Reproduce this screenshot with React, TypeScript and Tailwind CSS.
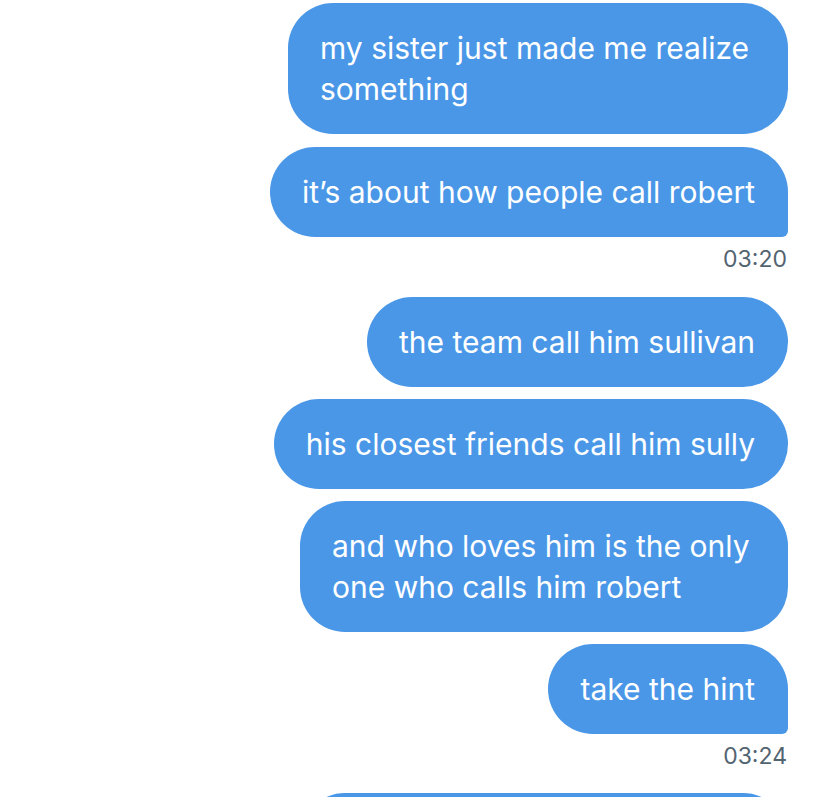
const Bubble = ({ text, last, width }: { text: string; last?: boolean; width?: string }) => (
  <div
    className={`${width ?? "w-fit"} bg-[#4a97e8] text-white text-[30px] leading-[41px] pl-8 pr-[33px] py-[24.5px] rounded-[45px] ${
      last ? "rounded-br-[6px]" : ""
    }`}
  >
    {text}
  </div>
);

const Time = ({ children }: { children: string }) => (
  <div className="text-[23px] leading-[28px] text-[#536471] mt-2 mr-px">{children}</div>
);

const App = () => {
  return (
    <div
      className="h-[797px] overflow-hidden bg-white pr-10 pt-[3px] flex flex-col items-end"
      style={{ fontFamily: "Inter, 'Open Sans', sans-serif" }}
    >
      <div className="flex flex-col items-end gap-[13px]">
        <Bubble text="my sister just made me realize something" width="w-[500px]" />
        <Bubble text="it’s about how people call robert" last />
      </div>
      <Time>03:20</Time>

      <div className="flex flex-col items-end gap-3 mt-6">
        <Bubble text="the team call him sullivan" />
        <Bubble text="his closest friends call him sully" />
        <Bubble text="and who loves him is the only one who calls him robert" width="w-[488px]" />
        <Bubble text="take the hint" last />
      </div>
      <Time>03:24</Time>

      {/* next message, cut off at the bottom */}
      <div className="mt-[23px] w-[488px] h-[90px] bg-[#4a97e8] rounded-[45px] shrink-0" />
    </div>
  );
};

export default App;
